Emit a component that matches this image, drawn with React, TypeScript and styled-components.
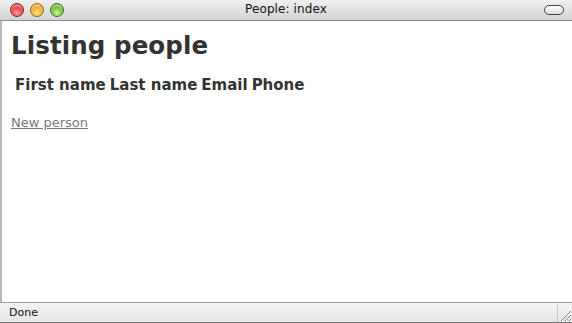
import React from 'react';
import styled, { createGlobalStyle } from 'styled-components';

const Global = createGlobalStyle`
  html, body { margin: 0; padding: 0; background: #fff; }
  body { width: 572px; height: 323px; overflow: hidden; }
`;

const Window = styled.div`
  width: 572px;
  height: 323px;
  display: flex;
  flex-direction: column;
  font-family: 'DejaVu Sans', Verdana, sans-serif;
  background: #fff;
`;

const TitleBar = styled.div`
  height: 20px;
  flex: none;
  display: flex;
  align-items: center;
  position: relative;
  background: linear-gradient(#f0f0f0, #d4d4d4);
  border-bottom: 1px solid #8a8a8a;
`;

const Lights = styled.div`
  display: flex;
  gap: 6px;
  padding-left: 10px;
`;

const Light = styled.span<{ $c1: string; $c2: string; $edge: string }>`
  width: 14px;
  height: 14px;
  border-radius: 50%;
  box-sizing: border-box;
  border: 1px solid ${p => p.$edge};
  background: radial-gradient(circle at 50% 75%, ${p => p.$c1} 0%, ${p => p.$c2} 70%);
  box-shadow: inset 0 2px 2px rgba(255, 255, 255, 0.55);
`;

const Title = styled.div`
  position: absolute;
  left: 0;
  right: 0;
  top: 2px;
  text-align: center;
  font-size: 12px;
  color: #111;
  letter-spacing: 0.1px;
`;

const Pill = styled.span`
  margin-left: auto;
  margin-right: 8px;
  width: 18px;
  height: 8px;
  border: 1.5px solid #444;
  border-radius: 5px;
  background: linear-gradient(#fff, #ddd);
`;

const Page = styled.div`
  flex: 1;
  border-left: 2px solid #b8b8b8;
  padding: 9px 9px;
  color: #333;
`;

const Heading = styled.h1`
  margin: 0 0 13px;
  font-size: 24.5px;
  font-weight: bold;
  line-height: 32px;
  letter-spacing: 0.1px;
`;

const Table = styled.div`
  display: flex;
  gap: 4px;
  padding-left: 4px;
  font-size: 15px;
  font-weight: bold;
  line-height: 20px;
`;

const Link = styled.a`
  display: inline-block;
  margin-top: 20px;
  font-size: 13px;
  color: #777;
  text-decoration: underline;
`;

const StatusBar = styled.div`
  height: 19px;
  flex: none;
  display: flex;
  align-items: center;
  border-top: 1px solid #9a9a9a;
  background: linear-gradient(#f3f3f3, #e6e6e6);
  border-bottom: 1px solid #777;
  padding-left: 9px;
  font-size: 11px;
  color: #111;
`;

const Grip = styled.div`
  margin-left: auto;
  width: 14px;
  height: 18px;
  border-left: 1px solid #c8c8c8;
`;

export default function App() {
  return (
    <>
      <Global />
      <Window>
        <TitleBar>
          <Lights>
            <Light $c1="#ffa49a" $c2="#d8232a" $edge="#8c1b1b" />
            <Light $c1="#ffe48a" $c2="#e8950f" $edge="#9a6010" />
            <Light $c1="#cef79a" $c2="#58a81c" $edge="#3e6f14" />
          </Lights>
          <Title>People: index</Title>
          <Pill />
        </TitleBar>
        <Page>
          <Heading>Listing people</Heading>
          <Table>
            <span>First name</span>
            <span>Last name</span>
            <span>Email</span>
            <span>Phone</span>
          </Table>
          <Link href="#">New person</Link>
        </Page>
        <StatusBar>
          Done
          <Grip>
            <svg width="14" height="18" viewBox="0 0 14 18">
              <path d="M3 17 L13 7 M7 17 L13 11 M11 17 L13 15" stroke="#888" strokeWidth="1" />
            </svg>
          </Grip>
        </StatusBar>
      </Window>
    </>
  );
}
